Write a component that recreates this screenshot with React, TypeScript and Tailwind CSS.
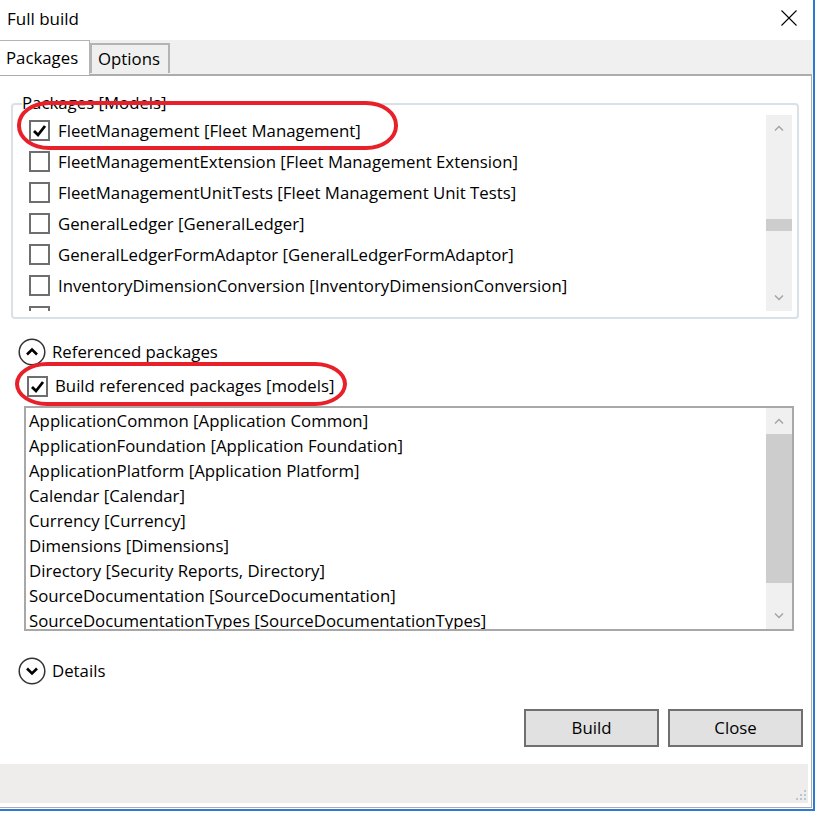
import React from "react";

const pkgs: [string, boolean][] = [
  ["FleetManagement [Fleet Management]", true],
  ["FleetManagementExtension [Fleet Management Extension]", false],
  ["FleetManagementUnitTests [Fleet Management Unit Tests]", false],
  ["GeneralLedger [GeneralLedger]", false],
  ["GeneralLedgerFormAdaptor [GeneralLedgerFormAdaptor]", false],
  ["InventoryDimensionConversion [InventoryDimensionConversion]", false],
  ["Ledger [Ledger]", false],
];

const refs = [
  "ApplicationCommon [Application Common]",
  "ApplicationFoundation [Application Foundation]",
  "ApplicationPlatform [Application Platform]",
  "Calendar [Calendar]",
  "Currency [Currency]",
  "Dimensions [Dimensions]",
  "Directory [Security Reports, Directory]",
  "SourceDocumentation [SourceDocumentation]",
  "SourceDocumentationTypes [SourceDocumentationTypes]",
];

function CheckBox({ checked }: { checked: boolean }) {
  return (
    <span className="w-[21px] h-[21px] shrink-0 border-2 border-[#6e6e6e] bg-white flex items-center justify-center">
      {checked && (
        <svg width="15" height="15" viewBox="0 0 15 15">
          <polyline points="2,8 6,12 13,3" fill="none" stroke="#000" strokeWidth="2.8" />
        </svg>
      )}
    </span>
  );
}

function Chevron({ up }: { up: boolean }) {
  return (
    <svg width="10" height="6" viewBox="0 0 10 6">
      <polyline
        points={up ? "1,5.5 5,1.5 9,5.5" : "1,0.5 5,4.5 9,0.5"}
        fill="none"
        stroke="#a3a3a3"
        strokeWidth="1.4"
      />
    </svg>
  );
}

function Expander({ up, label }: { up: boolean; label: string }) {
  return (
    <div className="flex items-center h-[28px] ml-[18px]">
      <svg width="28" height="28" viewBox="0 0 28 28">
        <circle cx="14" cy="14" r="12.8" fill="none" stroke="#333" strokeWidth="1.5" />
        <polyline
          points={up ? "9,16.5 14,11.5 19,16.5" : "9,11.5 14,16.5 19,11.5"}
          fill="none"
          stroke="#000"
          strokeWidth="2.6"
        />
      </svg>
      <span className="ml-[6px] text-[16.8px] leading-none">{label}</span>
    </div>
  );
}

export default function App() {
  return (
    <div className="relative w-[815px] h-[816px] bg-white overflow-hidden font-['Open_Sans',sans-serif] text-black">
      <div className="w-[815px] h-[811px] border-r-2 border-b-2 border-[#2c7bd3] flex flex-col bg-white">
        {/* Title bar */}
        <div className="h-[40px] flex items-center justify-between pl-[7px] pr-[16px] pb-[4px] shrink-0">
          <span className="text-[17px] leading-none">Full build</span>
          <svg width="16" height="16" viewBox="0 0 16 16">
            <path d="M0.5 0.5 L15.5 15.5 M15.5 0.5 L0.5 15.5" stroke="#000" strokeWidth="1.1" />
          </svg>
        </div>
        {/* Tab strip */}
        <div className="h-[34px] bg-[#f0f0f0] flex items-end shrink-0 relative z-10">
          <div className="w-[90px] h-[35px] -mb-[1px] bg-white border-t border-r border-[#b4b4b4] flex items-center pl-[6px] text-[16.8px]">
            Packages
          </div>
          <div className="w-[80px] h-[30px] mb-[1px] bg-[#efefef] border-t-2 border-l-2 border-r-2 border-[#b4b4b4] flex items-center pl-[6px] text-[16.8px]">
            Options
          </div>
        </div>
        {/* Panel */}
        <div className="flex-1 flex flex-col border-t-2 border-r border-b border-[#acacac] mr-[1px] mb-[1px] bg-white">
          {/* Group box */}
          <div className="relative mt-[27px] ml-[11px] w-[788px] h-[216px] border-2 border-[#d9e1e8] rounded-[4px] shrink-0">
            <span className="absolute left-[9px] -top-[13px] bg-white pr-[2px] text-[16.8px] leading-[22px]">
              Packages [Models]
            </span>
            <div className="mt-[10px] mx-[5px] h-[196px] flex">
              <div className="flex-1 overflow-hidden pl-[11px]">
                {pkgs.map(([t, c]) => (
                  <div key={t} className="h-[31px] flex items-center gap-[8px] text-[16.8px] whitespace-nowrap">
                    <CheckBox checked={c} />
                    <span>{t}</span>
                  </div>
                ))}
              </div>
              <div className="w-[26px] bg-[#f0f0f0] flex flex-col">
                <div className="h-[26px] flex items-center justify-center">
                  <Chevron up />
                </div>
                <div className="h-[78px]" />
                <div className="h-[12px] bg-[#cdcdcd]" />
                <div className="flex-1" />
                <div className="h-[26px] flex items-center justify-center">
                  <Chevron up={false} />
                </div>
              </div>
            </div>
          </div>

          <div className="mt-[19px]">
            <Expander up label="Referenced packages" />
          </div>

          <div className="mt-[6px] h-[28px] flex items-center ml-[27px] gap-[7px] text-[16.8px]">
            <CheckBox checked />
            <span>Build referenced packages [models]</span>
          </div>

          {/* Referenced list */}
          <div className="mt-[6px] ml-[24px] w-[770px] h-[225px] border-2 border-[#a8a8a8] flex shrink-0">
            <div className="flex-1 overflow-hidden pl-[3px]">
              {refs.map((t) => (
                <div key={t} className="h-[25px] flex items-center text-[16.8px] whitespace-nowrap">
                  {t}
                </div>
              ))}
            </div>
            <div className="w-[26px] bg-[#f0f0f0] flex flex-col">
              <div className="h-[26px] flex items-center justify-center">
                <Chevron up />
              </div>
              <div className="h-[149px] bg-[#cdcdcd]" />
              <div className="flex-1" />
              <div className="h-[26px] flex items-center justify-center">
                <Chevron up={false} />
              </div>
            </div>
          </div>

          <div className="mt-[26px]">
            <Expander up={false} label="Details" />
          </div>

          {/* Buttons */}
          <div className="mt-[24px] flex justify-end gap-[9px] mr-[8px]">
            <button className="w-[135px] h-[38px] bg-[#e1e1e1] border-2 border-[#707070] text-[16.8px]">
              Build
            </button>
            <button className="w-[135px] h-[38px] bg-[#e1e1e1] border-2 border-[#707070] text-[16.8px]">
              Close
            </button>
          </div>

          {/* Status bar */}
          <div className="relative mt-[17px] h-[39px] mr-[3px] bg-[#efedec] shrink-0">
            <svg className="absolute right-[1px] bottom-[1px]" width="14" height="14" viewBox="0 0 14 14">
              {[
                [11, 2], [11, 6], [7, 6], [11, 10], [7, 10], [3, 10],
              ].map(([x, y]) => (
                <rect key={`${x}-${y}`} x={x} y={y} width="2" height="2" fill="#b8c4d8" />
              ))}
            </svg>
          </div>
          <div className="flex-1" />
        </div>
      </div>

      {/* Red highlight marks */}
      <div className="absolute left-[17px] top-[101px] w-[381px] h-[49px] border-4 border-[#e8202a] rounded-[32px/24px] pointer-events-none" />
      <div className="absolute left-[15px] top-[362px] w-[332px] h-[44px] border-4 border-[#e8202a] rounded-[32px/22px] pointer-events-none" />
    </div>
  );
}
